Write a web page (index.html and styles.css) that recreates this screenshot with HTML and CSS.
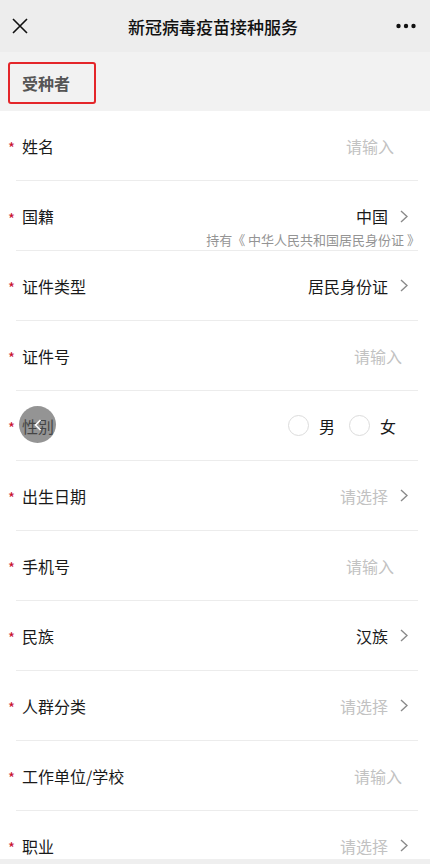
FILE: index.html
```html
<!DOCTYPE html>
<html lang="zh-CN">
<head>
<meta charset="utf-8">
<title>新冠病毒疫苗接种服务</title>
<link rel="stylesheet" href="styles.css">
</head>
<body>
<div class="app">
  <header class="nav">
    <svg class="nav-close" width="16" height="16" viewBox="0 0 16 16"><path d="M1 1 L15 15 M15 1 L1 15" stroke="#111" stroke-width="1.6" fill="none"/></svg>
    <div class="nav-title">新冠病毒疫苗接种服务</div>
    <svg class="nav-more" width="20" height="6" viewBox="0 0 20 6"><circle cx="2.5" cy="3" r="2.2" fill="#111"/><circle cx="10" cy="3" r="2.2" fill="#111"/><circle cx="17.5" cy="3" r="2.2" fill="#111"/></svg>
  </header>
  <main class="content">
    <div class="section-head"><span class="section-box">受种者</span></div>
    <div class="form">
      <div class="item"><span class="star">*</span><span class="label">姓名</span><span class="ph pad-22">请输入</span></div>
      <div class="item item-hint">
        <div class="item-main"><span class="star">*</span><span class="label">国籍</span><span class="val">中国</span><svg class="chev" width="8" height="13" viewBox="0 0 8 13"><path d="M1 1 L7 6.5 L1 12" stroke="#8a8a8a" stroke-width="1.4" fill="none"/></svg></div>
        <div class="hint">持有《 中华人民共和国居民身份证 》</div>
      </div>
      <div class="item"><span class="star">*</span><span class="label">证件类型</span><span class="val">居民身份证</span><svg class="chev" width="8" height="13" viewBox="0 0 8 13"><path d="M1 1 L7 6.5 L1 12" stroke="#8a8a8a" stroke-width="1.4" fill="none"/></svg></div>
      <div class="item"><span class="star">*</span><span class="label">证件号</span><span class="ph pad-14">请输入</span></div>
      <div class="item"><span class="star">*</span><span class="label">性别</span>
        <div class="radios pad-radio">
          <span class="radio"></span><span class="radio-text">男</span>
          <span class="radio"></span><span class="radio-text">女</span>
        </div>
      </div>
      <div class="item"><span class="star">*</span><span class="label">出生日期</span><span class="ph">请选择</span><svg class="chev" width="8" height="13" viewBox="0 0 8 13"><path d="M1 1 L7 6.5 L1 12" stroke="#8a8a8a" stroke-width="1.4" fill="none"/></svg></div>
      <div class="item"><span class="star">*</span><span class="label">手机号</span><span class="ph pad-22">请输入</span></div>
      <div class="item"><span class="star">*</span><span class="label">民族</span><span class="val">汉族</span><svg class="chev" width="8" height="13" viewBox="0 0 8 13"><path d="M1 1 L7 6.5 L1 12" stroke="#8a8a8a" stroke-width="1.4" fill="none"/></svg></div>
      <div class="item"><span class="star">*</span><span class="label">人群分类</span><span class="ph">请选择</span><svg class="chev" width="8" height="13" viewBox="0 0 8 13"><path d="M1 1 L7 6.5 L1 12" stroke="#8a8a8a" stroke-width="1.4" fill="none"/></svg></div>
      <div class="item"><span class="star">*</span><span class="label">工作单位/学校</span><span class="ph pad-14">请输入</span></div>
      <div class="item"><span class="star">*</span><span class="label">职业</span><span class="ph">请选择</span><svg class="chev" width="8" height="13" viewBox="0 0 8 13"><path d="M1 1 L7 6.5 L1 12" stroke="#8a8a8a" stroke-width="1.4" fill="none"/></svg></div>
    </div>
    <div class="float-back"><svg width="8" height="12" viewBox="0 0 8 12"><path d="M6.5 1 L1.5 6 L6.5 11" stroke="#fff" stroke-width="1.6" fill="none"/></svg></div>
  </main>
  <footer class="bottom-bar"></footer>
</div>
</body>
</html>
```

FILE: styles.css
```css
* { box-sizing: border-box; }
html, body { margin: 0; padding: 0; }
body {
  font-family: "Noto Sans CJK SC", "Noto Sans", sans-serif;
  color: #1a1a1a;
  background: #fff;
}
.app {
  height: 864px;
  display: flex;
  flex-direction: column;
  overflow: hidden;
}
.nav {
  height: 52px;
  flex: none;
  background: #ededed;
  display: flex;
  align-items: center;
  padding: 0 13px 0 12px;
}
.nav-close { flex: none; }
.nav-title {
  flex: 1;
  text-align: center;
  font-size: 17px;
  font-weight: 500;
  color: #111;
  padding-left: 2px;
}
.nav-more { flex: none; margin-right: 1px; }
.content {
  flex: 1;
  overflow: hidden;
  position: relative;
}
.section-head {
  height: 59px;
  background: #f2f2f2;
  padding: 10px 0 0 8px;
}
.section-box {
  display: inline-flex;
  align-items: center;
  width: 88px;
  height: 42px;
  border: 2px solid #e4262a;
  border-radius: 3px;
  padding-left: 12px;
  font-size: 16px;
  font-weight: 700;
  color: #555;
}
.form { padding: 0 12px 0 16px; }
.item {
  height: 70px;
  border-bottom: 1px solid #ececec;
  display: flex;
  align-items: center;
}
.item-hint {
  display: block;
  padding-top: 24px;
}
.item-main {
  display: flex;
  align-items: center;
  height: 22px;
}
.hint {
  margin-top: 5px;
  text-align: right;
  font-size: 13px;
  line-height: 16px;
  color: #949494;
  margin-right: -2px;
}
.star {
  width: 14px;
  margin-left: -8px;
  color: #c8102e;
  font-size: 15px;
  line-height: 1;
  transform: translateY(2px);
}
.label {
  font-size: 16px;
  color: #1a1a1a;
  flex: 1;
}
.val {
  font-size: 16px;
  color: #1a1a1a;
}
.ph {
  font-size: 16px;
  color: #c2c2c2;
}
.pad-22 { margin-right: 24px; }
.pad-14 { margin-right: 16px; }
.pad-radio { margin-right: 22px; }
.chev {
  flex: none;
  margin-left: 12px;
  margin-right: 10px;
}
.radios {
  display: flex;
  align-items: center;
}
.radio {
  width: 21px;
  height: 21px;
  border: 1px solid #dcdcdc;
  border-radius: 50%;
  margin-right: 10px;
}
.radio-text {
  font-size: 16px;
  color: #1a1a1a;
  margin-right: 14px;
}
.radio-text:last-child { margin-right: 0; }
.float-back {
  position: absolute;
  left: 19px;
  top: 354px;
  width: 37px;
  height: 37px;
  border-radius: 50%;
  background: rgba(90, 90, 90, 0.65);
  display: flex;
  align-items: center;
  justify-content: center;
}
.bottom-bar {
  height: 5px;
  flex: none;
  background: #efefef;
}
```
